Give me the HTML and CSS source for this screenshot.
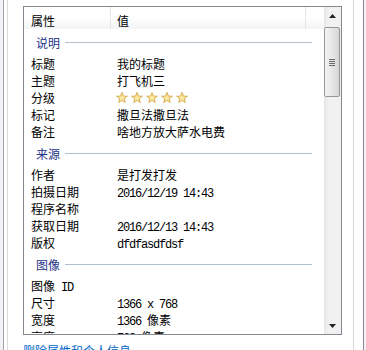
FILE: index.html
```html
<!DOCTYPE html>
<html>
<head>
    <title>属性</title>
    <link rel="stylesheet" href="styles.css">
</head>
<body>
    <div class="sheet">
        <div class="page">
            <div class="listview">
                <div class="list-main">
                    <div class="list-header">
                        <div class="col-name">属性</div>
                        <div class="col-value">值</div>
                        <div class="col-rest"></div>
                    </div>
                    <div class="list-body">
                        <div class="group"><span>说明</span></div>
                        <div class="row"><div class="name">标题</div><div class="value">我的标题</div></div>
                        <div class="row"><div class="name">主题</div><div class="value">打飞机三</div></div>
                        <div class="row">
                            <div class="name">分级</div>
                            <div class="value stars">
                                <svg class="star" viewBox="0 0 12 12"><polygon points="6,0.4 7.41,4.06 11.33,4.27 8.28,6.74 9.29,10.53 6,8.4 2.71,10.53 3.72,6.74 0.67,4.27 4.59,4.06"/></svg>
                                <svg class="star" viewBox="0 0 12 12"><polygon points="6,0.4 7.41,4.06 11.33,4.27 8.28,6.74 9.29,10.53 6,8.4 2.71,10.53 3.72,6.74 0.67,4.27 4.59,4.06"/></svg>
                                <svg class="star" viewBox="0 0 12 12"><polygon points="6,0.4 7.41,4.06 11.33,4.27 8.28,6.74 9.29,10.53 6,8.4 2.71,10.53 3.72,6.74 0.67,4.27 4.59,4.06"/></svg>
                                <svg class="star" viewBox="0 0 12 12"><polygon points="6,0.4 7.41,4.06 11.33,4.27 8.28,6.74 9.29,10.53 6,8.4 2.71,10.53 3.72,6.74 0.67,4.27 4.59,4.06"/></svg>
                                <svg class="star" viewBox="0 0 12 12"><polygon points="6,0.4 7.41,4.06 11.33,4.27 8.28,6.74 9.29,10.53 6,8.4 2.71,10.53 3.72,6.74 0.67,4.27 4.59,4.06"/></svg>
                            </div>
                        </div>
                        <div class="row"><div class="name">标记</div><div class="value">撒旦法撒旦法</div></div>
                        <div class="row"><div class="name">备注</div><div class="value">啥地方放大萨水电费</div></div>

                        <div class="group"><span>来源</span></div>
                        <div class="row"><div class="name">作者</div><div class="value">是打发打发</div></div>
                        <div class="row"><div class="name">拍摄日期</div><div class="value"><span class="mono">2016/12/19 14:43</span></div></div>
                        <div class="row"><div class="name">程序名称</div><div class="value"></div></div>
                        <div class="row"><div class="name">获取日期</div><div class="value"><span class="mono">2016/12/13 14:43</span></div></div>
                        <div class="row"><div class="name">版权</div><div class="value"><span class="mono">dfdfasdfdsf</span></div></div>

                        <div class="group"><span>图像</span></div>
                        <div class="row"><div class="name">图像<span class="mono"> ID</span></div><div class="value"></div></div>
                        <div class="row"><div class="name">尺寸</div><div class="value"><span class="mono">1366 x 768</span></div></div>
                        <div class="row"><div class="name">宽度</div><div class="value"><span class="mono">1366 </span>像素</div></div>
                        <div class="row"><div class="name">高度</div><div class="value"><span class="mono">768 </span>像素</div></div>
                    </div>
                </div>
                <div class="scrollbar">
                    <div class="sb-btn">
                        <svg width="7" height="4" viewBox="0 0 7 4"><polygon points="0,4 3.5,0 7,4" fill="#222"/></svg>
                    </div>
                    <div class="sb-thumb">
                        <div class="grip"></div>
                        <div class="grip"></div>
                        <div class="grip"></div>
                        <div class="grip"></div>
                    </div>
                    <div class="sb-track"></div>
                    <div class="sb-btn">
                        <svg width="7" height="4" viewBox="0 0 7 4"><polygon points="0,0 7,0 3.5,4" fill="#222"/></svg>
                    </div>
                </div>
            </div>
            <a class="remove-link" href="#">删除属性和个人信息</a>
        </div>
    </div>
</body>
</html>
```

FILE: styles.css
```css
html,
body {
    margin: 0;
    padding: 0;
}

body {
    width: 366px;
    height: 350px;
    overflow: hidden;
    background-color: #f3f1f5;
    font-family: "Noto Sans CJK SC", sans-serif;
    font-size: 12px;
    color: #000;
}

.sheet {
    margin-left: 3px;
    width: 361px;
    height: 350px;
    box-sizing: border-box;
    background-color: #fff;
    border-left: 1px solid #a6a6a6;
    border-right: 1px solid #8f8599;
}

.page {
    margin-left: 3px;
    width: 347px;
    height: 350px;
    box-sizing: border-box;
    padding: 6px 0 0 15px;
    border-left: 1px solid #dcdcdc;
    border-right: 1px solid #d6d6d6;
}

.listview {
    display: flex;
    width: 319px;
    height: 329px;
    box-sizing: border-box;
    border: 1px solid #828790;
    background-color: #fff;
}

.list-main {
    flex: 1;
    overflow: hidden;
}

.list-header {
    display: flex;
    height: 22px;
    box-sizing: border-box;
    background: linear-gradient(to bottom, #ffffff 0%, #ffffff 45%, #f3f4f6 100%);
}

.list-header div {
    box-sizing: border-box;
    padding-top: 6px;
    line-height: 16px;
}

.col-name {
    width: 87px;
    padding-left: 7px;
    border-right: 1px solid #e3e5e9;
}

.col-value {
    width: 195px;
    padding-left: 6px;
    border-right: 1px solid #e3e5e9;
}

.col-rest {
    flex: 1;
}

.group {
    display: flex;
    align-items: center;
    height: 26px;
    box-sizing: border-box;
    padding: 5px 12px 4px 12px;
    line-height: 17px;
    color: #1e3287;
}

.group::after {
    content: "";
    flex: 1;
    height: 1px;
    margin-left: 5px;
    background-color: #b3bfcb;
}

.row {
    display: flex;
    height: 17px;
    line-height: 17px;
    white-space: nowrap;
}

.name {
    width: 93px;
    box-sizing: border-box;
    padding-left: 7px;
}

.value {
    flex: 1;
}

.mono {
    font-family: "Liberation Mono", monospace;
    font-size: 12px;
    letter-spacing: -1.2px;
}

.stars {
    display: flex;
    align-items: center;
    margin-left: -1px;
}

.star {
    width: 12px;
    height: 12px;
    margin-right: 3px;
    fill: #f9e7a2;
    stroke: #cf9f38;
    stroke-width: 0.8;
}

.scrollbar {
    display: flex;
    flex-direction: column;
    width: 17px;
    background: linear-gradient(to right, #e6e6e6, #f2f2f2 30%, #f0f0f0);
}

.sb-btn {
    display: flex;
    align-items: center;
    justify-content: center;
    height: 17px;
}

.sb-thumb {
    display: flex;
    flex-direction: column;
    align-items: center;
    justify-content: center;
    gap: 1px;
    height: 70px;
    margin: 3px 1px 0 0;
    box-sizing: border-box;
    border: 1px solid #979797;
    border-radius: 2px;
    background: linear-gradient(to right, #f4f4f4, #e6e6e6 50%, #d6d6d6);
}

.grip {
    width: 6px;
    height: 1px;
    background-color: #6a6a6a;
}

.sb-track {
    flex: 1;
}

.remove-link {
    display: block;
    margin-top: 7px;
    line-height: 17px;
    color: #0066cc;
    text-decoration: none;
}
```
